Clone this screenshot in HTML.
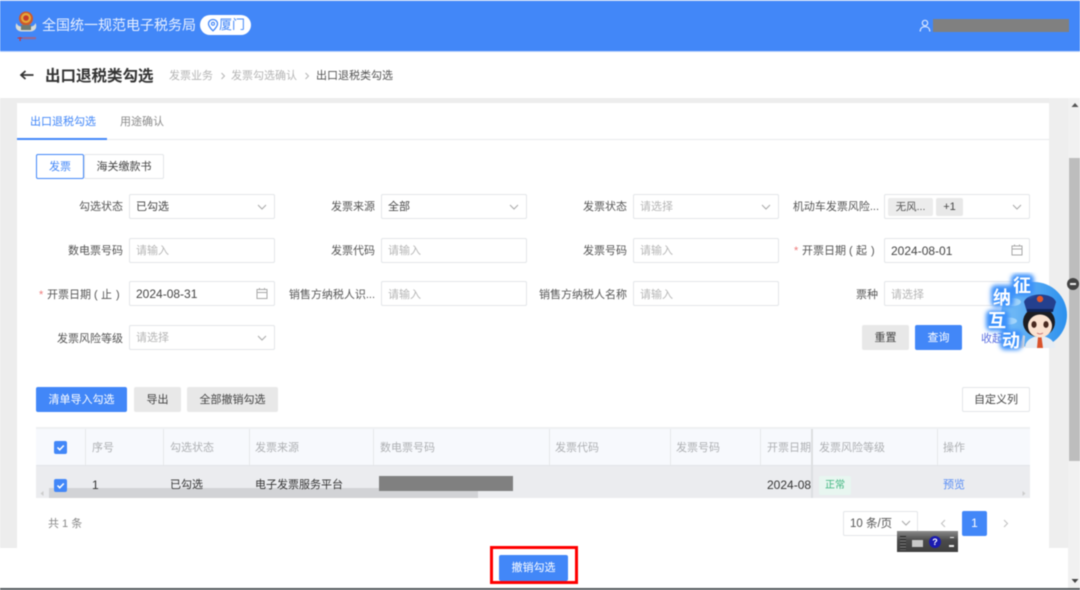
<!DOCTYPE html>
<html lang="zh"><head><meta charset="utf-8"><title>出口退税类勾选</title>
<style>
html,body{margin:0;padding:0;width:1080px;height:590px;overflow:hidden;background:#fff}
#p{position:relative;width:1080px;height:590px;overflow:hidden;font-family:"Liberation Sans","Noto Sans CJK SC",sans-serif;font-size:11px;color:#444;filter:blur(.4px)}
#p div,#p span.a,#p svg{position:absolute}
.t{white-space:nowrap;line-height:16px;height:16px}
.l{white-space:nowrap;line-height:16px;height:16px;text-align:right;color:#555}
.i{box-sizing:border-box;height:25px;width:146px;border:1px solid #e3e5e8;border-radius:2px;background:#fff;line-height:25px;padding-left:6px;color:#444;white-space:nowrap}
.d{font-size:12px}
.b{box-sizing:border-box;height:25px;border-radius:2px;text-align:center;line-height:27px;white-space:nowrap}
.g{background:#e8e8e8;color:#444}
.bl{background:#4287f8;color:#fff}
.w{background:#fff;border:1px solid #e3e5e8;line-height:25px}
.h{color:#aeb0b3;top:440px}
.c{top:477px;color:#333}
.sep{top:429px;width:1px;height:36px;background:#e6e8eb}
</style></head><body><div id="p">

<!-- header -->
<div style="left:0;top:0;width:1080px;height:1px;background:#c5d8f8"></div>
<div style="left:0;top:1px;width:1080px;height:50px;background:#4287f8"></div>
<div style="left:0;top:51px;width:1080px;height:1px;background:#bcd3fb"></div>
<svg style="left:14px;top:8px" width="24" height="34" viewBox="0 0 24 34">
<path d="M2.500 15c-2 4 0 8 4.500 8.500h10c4.500-.5 6.500-4.500 4.500-8.500-1 3-3.500 4-9.500 4s-8.500-1-9.500-4z" fill="#d9dcd8"/>
<circle cx="12" cy="10.500" r="7" fill="#cf5a2c"/>
<circle cx="12" cy="10" r="5" fill="#e3a93a"/>
<circle cx="12" cy="10" r="2.800" fill="#c63c2b"/>
<rect x="7" y="17" width="10" height="5" fill="#6d7b74"/>
<rect x="5.500" y="29" width="1.200" height="4" fill="#c33"/>
<rect x="3.500" y="29.500" width="5" height="1" fill="#c33"/>
<rect x="9" y="29" width="13" height="2.200" fill="#c55" opacity=".6"/>
</svg>
<div class="t" style="left:42px;top:16px;font-size:14px;color:#e8f0ff;line-height:18px;height:18px">全国统一规范电子税务局</div>
<div style="left:200px;top:15px;width:51px;height:20px;border-radius:10px;background:#fff"></div>
<svg style="left:206px;top:18px" width="14" height="14" viewBox="0 0 14 14"><path d="M7 1.500c-2.600 0-4.500 1.900-4.500 4.300 0 3 4.500 7 4.500 7s4.500-4 4.500-7c0-2.400-1.900-4.300-4.500-4.300z" fill="none" stroke="#4287f8" stroke-width="1.300"/><circle cx="7" cy="5.800" r="1.500" fill="none" stroke="#4287f8" stroke-width="1.100"/></svg>
<div class="t" style="left:219px;top:17px;font-size:13px;color:#4287f8">厦门</div>
<svg style="left:919px;top:19px" width="12" height="13" viewBox="0 0 12 13"><circle cx="6" cy="4" r="2.700" fill="none" stroke="#d8e6ff" stroke-width="1.200"/><path d="M1.200 12.500c0-3 2-4.800 4.800-4.800s4.800 1.800 4.800 4.800" fill="none" stroke="#d8e6ff" stroke-width="1.200"/></svg>
<div style="left:933px;top:19px;width:136px;height:13px;background:#808080"></div>

<!-- title row -->
<svg style="left:19px;top:68px" width="16" height="14" viewBox="0 0 16 14"><path d="M14.500 7H2M6.500 3 2 7l4.500 4" fill="none" stroke="#333" stroke-width="1.700"/></svg>
<div class="t" style="left:45px;top:67px;font-size:15.500px;font-weight:bold;color:#333;line-height:20px;height:20px">出口退税类勾选</div>
<div class="t" style="left:169px;top:68px;color:#b5b5b5">发票业务</div>
<div class="t" style="left:231px;top:68px;color:#b5b5b5">发票勾选确认</div>
<div class="t" style="left:316px;top:68px;color:#555">出口退税类勾选</div>
<svg style="left:0;top:0" width="1080" height="98" fill="none" stroke="#b5b5b5" stroke-width="1"><path d="M221.500 73l3 3-3 3M305.500 73l3 3-3 3"/></svg>

<!-- backgrounds -->
<div style="left:0;top:98px;width:1068px;height:450px;background:#ededed"></div>
<div style="left:17px;top:103px;width:1032px;height:445px;background:#fff"></div>
<div style="left:1049px;top:98px;width:19px;height:450px;background:#eeeeee"></div>
<div style="left:1068px;top:98px;width:12px;height:490px;background:#f1f1f1"></div>
<div style="left:1069px;top:158px;width:11px;height:303px;background:#bdbdbd"></div>
<svg style="left:1071px;top:102px" width="8" height="6"><path d="M4 1 7.500 5h-7z" fill="#555"/></svg>
<svg style="left:1071px;top:578px" width="8" height="6"><path d="M4 5 7.500 1h-7z" fill="#444"/></svg>
<div style="left:1067px;top:278px;width:12px;height:12px;border-radius:6px;background:#444"></div>
<div style="left:1070px;top:283px;width:6px;height:2px;background:#eee"></div>
<div style="left:0;top:588px;width:1080px;height:2px;background:#555b5e"></div>

<!-- tabs -->
<div class="t" style="left:30px;top:114px;color:#4287f8">出口退税勾选</div>
<div class="t" style="left:120px;top:114px;color:#8a8a8a">用途确认</div>
<div style="left:17px;top:139px;width:1032px;height:1px;background:#e8eaec"></div>
<div style="left:17px;top:138px;width:90px;height:2px;background:#4287f8"></div>
<div class="b w" style="left:84px;top:154px;width:80px;color:#444">海关缴款书</div>
<div class="b w" style="left:36px;top:154px;width:48px;color:#4287f8;border-color:#4287f8">发票</div>

<!-- row 1 -->
<div class="l" style="left:23px;top:199px;width:100px">勾选状态</div>
<div class="i" style="left:129px;top:194px">已勾选</div>
<div class="l" style="left:275px;top:199px;width:100px">发票来源</div>
<div class="i" style="left:381px;top:194px">全部</div>
<div class="l" style="left:527px;top:199px;width:100px">发票状态</div>
<div class="i" style="left:633px;top:194px;color:#b5b5b5">请选择</div>
<div class="l" style="left:781px;top:199px;width:98px">机动车发票风险...</div>
<div class="i" style="left:884px;top:194px"></div>
<div class="b" style="left:888px;top:198px;width:45px;height:18px;line-height:19px;background:#ececec;color:#555;font-size:10.500px">无风...</div>
<div class="b" style="left:936px;top:198px;width:27px;height:18px;line-height:19px;background:#e8e8e8;color:#444;font-size:11px">+1</div>

<!-- row 2 -->
<div class="l" style="left:23px;top:243px;width:100px">数电票号码</div>
<div class="i" style="left:129px;top:238px;color:#b5b5b5">请输入</div>
<div class="l" style="left:275px;top:243px;width:100px">发票代码</div>
<div class="i" style="left:381px;top:238px;color:#b5b5b5">请输入</div>
<div class="l" style="left:527px;top:243px;width:100px">发票号码</div>
<div class="i" style="left:633px;top:238px;color:#b5b5b5">请输入</div>
<div class="t" style="left:794px;top:243px;color:#555"><span style="color:#e77">*</span></div>
<div class="t" style="left:802px;top:243px;color:#555">开票日期</div>
<div class="t" style="left:849px;top:243px;color:#555">(</div>
<div class="t" style="left:856px;top:243px;color:#555">起</div>
<div class="t" style="left:871px;top:243px;color:#555">)</div>
<div class="i d" style="left:884px;top:238px">2024-08-01</div>

<!-- row 3 -->
<div class="t" style="left:39px;top:287px;color:#555"><span style="color:#e77">*</span></div>
<div class="t" style="left:47px;top:287px;color:#555">开票日期</div>
<div class="t" style="left:94px;top:287px;color:#555">(</div>
<div class="t" style="left:101px;top:287px;color:#555">止</div>
<div class="t" style="left:116px;top:287px;color:#555">)</div>
<div class="i d" style="left:129px;top:281px">2024-08-31</div>
<div class="l" style="left:275px;top:287px;width:100px">销售方纳税人识...</div>
<div class="i" style="left:381px;top:281px;color:#b5b5b5;line-height:26px">请输入</div>
<div class="l" style="left:527px;top:287px;width:100px">销售方纳税人名称</div>
<div class="i" style="left:633px;top:281px;color:#b5b5b5;line-height:26px">请输入</div>
<div class="l" style="left:780px;top:287px;width:98px">票种</div>
<div class="i" style="left:884px;top:281px;color:#b5b5b5;line-height:26px">请选择</div>

<!-- row 4 -->
<div class="l" style="left:23px;top:331px;width:100px">发票风险等级</div>
<div class="i" style="left:129px;top:325px;color:#b5b5b5">请选择</div>
<div class="b g" style="left:862px;top:325px;width:47px">重置</div>
<div class="b bl" style="left:915px;top:325px;width:47px">查询</div>

<!-- chevrons -->
<svg style="left:0;top:0" width="1080" height="590" viewBox="0 0 1080 590" fill="none" stroke="#a8a8a8" stroke-width="1">
<path d="M258 205l4 4 4-4M510 205l4 4 4-4M762 205l4 4 4-4M1013 205l4 4 4-4M258 336l4 4 4-4"/>
<path d="M1012 246h10v9h-10zM1012 249h10M1014.500 244.500v2M1019.500 244.500v2"/>
<path d="M257 289.500h10v9h-10zM257 292.500h10M259.500 288v2M264.500 288v2"/>
</svg>

<!-- mascot -->
<svg style="left:975px;top:272px" width="94" height="82" viewBox="0 0 94 82">
<defs><filter id="gl" x="-50%" y="-50%" width="200%" height="200%"><feGaussianBlur stdDeviation="2"/></filter>
<linearGradient id="mb" x1="0" x2="1" y1="0" y2="0"><stop offset="0" stop-color="#7cc0f7"/><stop offset="1" stop-color="#2b90ee"/></linearGradient></defs>
<circle cx="59" cy="43" r="33" fill="url(#mb)"/>
<ellipse cx="37" cy="30" rx="9" ry="4" fill="#a3d5fa"/>
<ellipse cx="34" cy="49" rx="8" ry="3.500" fill="#a3d5fa"/>
<path d="M50 76c0-8 8-12 15-12s15 4 15 12z" fill="#e6edf4"/>
<path d="M63 65h3.500l1.500 11h-6z" fill="#d9532c"/>
<ellipse cx="64" cy="50" rx="16" ry="15" fill="#1d1d22"/>
<ellipse cx="65" cy="54" rx="12" ry="11.500" fill="#fbe2d0"/>
<path d="M49 30c3-10 29-10 32 0l-3 10c-8-3-18-3-26 0z" fill="#24408e"/>
<rect x="52" y="37" width="26" height="3" fill="#0f2458"/>
<circle cx="65" cy="27" r="3.200" fill="#e2572b"/>
<ellipse cx="59" cy="52.500" rx="2.600" ry="3.400" fill="#4a2a20"/>
<ellipse cx="71" cy="52.500" rx="2.600" ry="3.400" fill="#4a2a20"/>
<path d="M62 61q3 2 6 0" fill="none" stroke="#c77" stroke-width="1"/>
<path d="M44 76l-2-12 2 0 2 6 2-7 2 1-1 12z" fill="#f3e3d5"/>
<text x="6" y="70" font-family="Liberation Sans,Noto Sans CJK SC,sans-serif" font-size="11" fill="#5b6fe0">收起</text>
<g fill="#3a90fa" filter="url(#gl)">
<rect x="36" y="2" width="23" height="22" rx="5"/><rect x="16" y="13" width="23" height="22" rx="5"/><rect x="11" y="38" width="23" height="21" rx="5"/><rect x="25" y="58" width="22" height="20" rx="5"/>
</g>
<g font-family="Liberation Sans,Noto Sans CJK SC,sans-serif" font-size="18" font-weight="bold" fill="#fff">
<text x="38" y="20">征</text><text x="18" y="32">纳</text><text x="13" y="55">互</text><text x="27" y="75">动</text>
</g>
</svg>

<!-- action buttons -->
<div class="b bl" style="left:36px;top:387px;width:91px">清单导入勾选</div>
<div class="b g" style="left:134px;top:387px;width:47px">导出</div>
<div class="b g" style="left:187px;top:387px;width:91px">全部撤销勾选</div>
<div class="b w" style="left:962px;top:387px;width:68px">自定义列</div>

<!-- table -->
<div style="left:36px;top:427px;width:994px;height:38px;background:#f7f9fd;border-top:2px solid #eef0f2;box-sizing:border-box"></div>
<div style="left:36px;top:465px;width:994px;height:1px;background:#e3e5e8"></div>
<div style="left:36px;top:466px;width:994px;height:32px;background:#ebecef"></div>
<div style="left:49px;top:488px;width:429px;height:10px;background:#d2d3d6"></div>
<svg style="left:39px;top:490px" width="6" height="7"><path d="M4.500 1 1.500 3.500l3 2.500" fill="#ccc"/></svg>
<svg style="left:1021px;top:490px" width="6" height="7"><path d="M1.500 1 4.500 3.500l-3 2.500" fill="#ccc"/></svg>
<div class="sep" style="left:85px"></div><div class="sep" style="left:163px"></div><div class="sep" style="left:249px"></div><div class="sep" style="left:373px"></div><div class="sep" style="left:549px"></div><div class="sep" style="left:670px"></div><div class="sep" style="left:760px"></div><div class="sep" style="left:937px"></div>
<div style="left:811px;top:429px;width:2px;height:69px;background:#dcdee1"></div>

<div style="left:54px;top:441px;width:13px;height:13px;border-radius:2px;background:#4287f8"></div>
<div style="left:54px;top:479px;width:13px;height:13px;border-radius:2px;background:#4287f8"></div>
<svg style="left:54px;top:441px" width="13" height="13"><path d="M3.500 6.500 5.700 8.800 9.800 4.500" fill="none" stroke="#fff" stroke-width="1.500"/></svg>
<svg style="left:54px;top:479px" width="13" height="13"><path d="M3.500 6.500 5.700 8.800 9.800 4.500" fill="none" stroke="#fff" stroke-width="1.500"/></svg>

<div class="t h" style="left:92px">序号</div>
<div class="t h" style="left:170px">勾选状态</div>
<div class="t h" style="left:255px">发票来源</div>
<div class="t h" style="left:380px">数电票号码</div>
<div class="t h" style="left:555px">发票代码</div>
<div class="t h" style="left:676px">发票号码</div>
<div class="t h" style="left:767px;width:44px;overflow:hidden">开票日期</div>
<div class="t h" style="left:819px">发票风险等级</div>
<div class="t h" style="left:943px">操作</div>

<div class="t c" style="left:92px;font-size:12px">1</div>
<div class="t c" style="left:170px">已勾选</div>
<div class="t c" style="left:255px">电子发票服务平台</div>
<div style="left:379px;top:476px;width:134px;height:15px;background:#808080"></div>
<div class="t c" style="left:767px;width:44px;overflow:hidden;font-size:12px">2024-08</div>
<div style="left:819px;top:476px;width:32px;height:19px;background:#e8f6f0;border-radius:2px"></div>
<div class="t" style="left:825px;top:478px;color:#3cb57d;font-size:10px">正常</div>
<div class="t" style="left:943px;top:477px;color:#5a8ef5">预览</div>

<!-- pagination -->
<div class="t" style="left:48px;top:516px;color:#888">共 1 条</div>
<div class="i" style="left:843px;top:511px;width:75px;color:#555;font-size:11.500px">10 条/页</div>
<svg style="left:0;top:0" width="1080" height="590" viewBox="0 0 1080 590" fill="none" stroke-width="1">
<path d="M902 521l4 4 4-4" stroke="#a8a8a8"/>
<path d="M945 520l-3.500 3.500 3.500 3.500" stroke="#c0c0c0"/>
<path d="M1004 520l3.500 3.500-3.500 3.500" stroke="#c0c0c0"/>
</svg>
<div class="b bl" style="left:962px;top:511px;width:25px;font-size:12px;line-height:25px">1</div>

<!-- ime toolbar -->
<div style="left:897px;top:531px;width:61px;height:21px;background:linear-gradient(#8a8a8a,#4a4a4a 45%,#3f3f3f)"></div>
<div style="left:900px;top:536px;width:6px;height:14px;background:repeating-linear-gradient(#222 0 1px,#666 1px 3px)"></div>
<div style="left:912px;top:540px;width:11px;height:7px;background:#c8c8c8"></div>
<div style="left:929px;top:536px;width:12px;height:12px;border-radius:6px;background:#1b1bb0;color:#fff;font-size:9px;font-weight:bold;line-height:12px;text-align:center">?</div>
<div style="left:950px;top:537px;width:4px;height:1px;background:#eee"></div>
<div style="left:949px;top:545px;width:5px;height:2px;background:#eee"></div>

<!-- bottom bar -->
<div class="b bl" style="left:499px;top:555px;width:69px;height:26px;line-height:27px">撤销勾选</div>
<div style="left:490px;top:546px;width:88px;height:38px;box-sizing:border-box;border:3px solid #f00"></div>
</div></body></html>
